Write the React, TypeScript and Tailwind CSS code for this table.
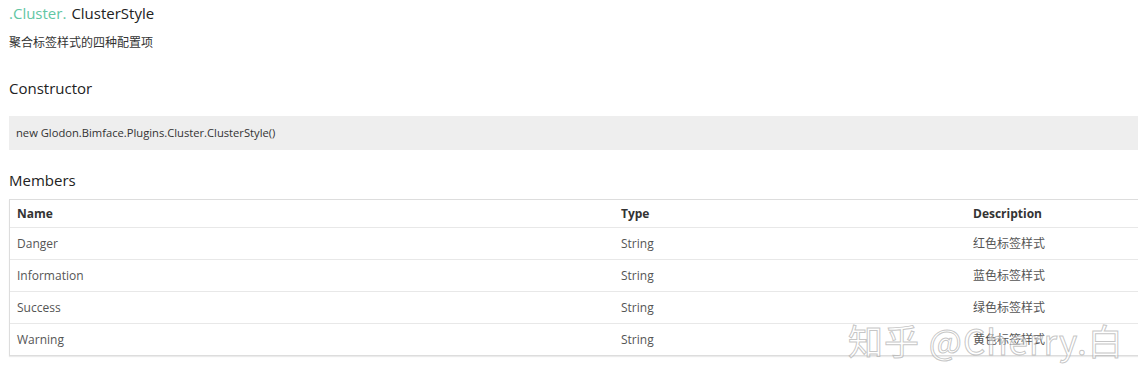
import React from 'react';

const members = [
  { name: 'Danger', type: 'String', desc: '红色标签样式' },
  { name: 'Information', type: 'String', desc: '蓝色标签样式' },
  { name: 'Success', type: 'String', desc: '绿色标签样式' },
  { name: 'Warning', type: 'String', desc: '黄色标签样式' },
];

const font = { fontFamily: '"Open Sans", "Noto Sans CJK SC", sans-serif' };

export default function App() {
  return (
    <div className="relative w-[1138px] h-[391px] overflow-hidden bg-white text-[#333]" style={font}>
      <div className="pl-[9px]">
        <div className="h-[26px] flex items-center text-[15px] leading-none">
          <span className="text-[#62c6a3]">.Cluster.</span>
          <span className="ml-[5px] text-[#222]">ClusterStyle</span>
        </div>
        <div className="h-[34px] flex items-center text-[12px] text-[#333]">聚合标签样式的四种配置项</div>
        <div className="mt-[16px] h-[24px] flex items-center text-[15px] text-[#222]">Constructor</div>
      </div>

      <div className="mt-[16px] ml-[9px] h-[34px] bg-[#eeeeee] flex items-center pl-[7px] text-[11.2px] text-[#333]">
        new Glodon.Bimface.Plugins.Cluster.ClusterStyle()
      </div>

      <div className="pl-[9px] mt-[18px] h-[24px] flex items-center text-[15px] text-[#222]">Members</div>

      <div className="mt-[7px] ml-[9px] w-[1140px] border border-[#dddddd] border-r-0 shadow-[0_1px_1px_rgba(0,0,0,0.08)] text-[12px]">
        <div className="flex h-[27px] items-center font-bold text-[#333]">
          <div className="w-[603px] pl-[7px]">Name</div>
          <div className="w-[353px] pl-[8px]">Type</div>
          <div className="pl-[7px]">Description</div>
        </div>
        {members.map((m) => (
          <div key={m.name} className="flex h-[32px] items-center border-t border-[#e8e8e8] text-[#555]">
            <div className="w-[603px] pl-[7px]">{m.name}</div>
            <div className="w-[353px] pl-[8px]">{m.type}</div>
            <div className="pl-[7px]">{m.desc}</div>
          </div>
        ))}
      </div>

      {/* watermark */}
      <div
        className="absolute left-[848px] top-[322px] text-[35px] leading-none tracking-[1px] text-[rgba(255,255,255,0.55)] whitespace-nowrap pointer-events-none"
        style={{ fontFamily: '"Noto Sans CJK SC", "Liberation Sans", sans-serif', WebkitTextStroke: '1px rgba(160,160,160,0.6)' }}
      >
        知乎 @Cherry.白
      </div>
    </div>
  );
}
